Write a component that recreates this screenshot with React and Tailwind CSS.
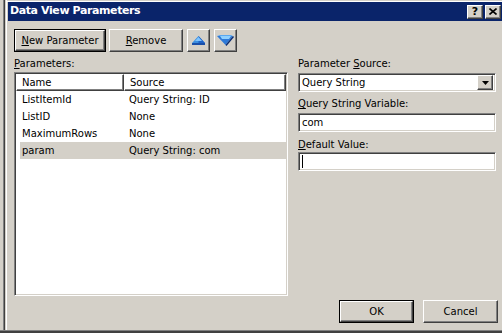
const raised =
  'border border-t-white border-l-white border-r-[#404040] border-b-[#404040] shadow-[inset_-1px_-1px_0_#808080]';
const sunken =
  'border border-t-[#808080] border-l-[#808080] border-r-white border-b-white shadow-[inset_1px_1px_0_#404040,inset_-1px_-1px_0_#d4d0c8]';

function Btn({ children, w, isDefault }) {
  if (isDefault) {
    return (
      <div className={`border border-black h-[23px] ${w}`}>
        <div className={`${raised} h-full w-full flex items-center justify-center`}>{children}</div>
      </div>
    );
  }
  return <div className={`${raised} h-[23px] ${w} flex items-center justify-center`}>{children}</div>;
}

function UpArrow() {
  return (
    <svg width="15" height="10" viewBox="0 0 15 10">
      <polygon points="7.5,0 14,7 1,7" fill="#3b8fe0" />
      <polygon points="7.5,0 14,7 7.5,7" fill="#1f63c8" />
      <polygon points="7.5,1 4,5 11,5" fill="#7ec4ff" />
      <rect x="1" y="7" width="13" height="2" fill="#1a4fa8" />
    </svg>
  );
}

function DownArrow() {
  return (
    <svg width="17" height="11" viewBox="0 0 17 11">
      <polygon points="0,1 16,1 8.5,10" fill="#2f7ad8" />
      <polygon points="3,1 14,1 12,4 5,4" fill="#8fd0ff" />
      <polygon points="8.5,10 16,1 17,2 9.5,11" fill="#0a2a70" />
      <polygon points="0,1 3,0 14,0 16,1" fill="#5aa8f0" />
    </svg>
  );
}

function U({ children }) {
  return <span className="underline underline-offset-[1px]">{children}</span>;
}

const rows = [
  ['ListItemId', 'Query String: ID'],
  ['ListID', 'None'],
  ['MaximumRows', 'None'],
  ['param', 'Query String: com'],
];

export default function App() {
  return (
    <div
      className="w-[502px] h-[333px] bg-[#d4d0c8] flex flex-col overflow-hidden text-[10px] text-black"
      style={{ fontFamily: '"DejaVu Sans", Tahoma, sans-serif' }}
    >
      <div className="flex h-[330px]">
        {/* frame edge of the window behind and this one */}
        <div className="w-[3px]" />
        <div className="w-px bg-[#808080]" />
        <div className="w-px bg-[#404040]" />
        <div className="w-px" />
        <div className="w-px bg-white" />

        <div className="flex-1 flex flex-col">
          <div className="h-px" />
          <div className="h-px bg-white" />
          {/* title bar */}
          <div className="ml-px h-[19px] bg-[#0a246a] flex items-center pl-[2px] pr-[1px]">
            <span className="text-white font-bold text-[11px] tracking-[-0.4px]">Data View Parameters</span>
            <div className="ml-auto flex items-center text-black">
              <div className={`${raised} bg-[#d4d0c8] w-[16px] h-[14px] flex items-center justify-center text-[11px] font-bold leading-none`}>?</div>
              <div className={`${raised} bg-[#d4d0c8] ml-[2px] w-[16px] h-[14px] flex items-center justify-center`}>
                <svg width="8" height="7" viewBox="0 0 8 7">
                  <path d="M0.5 0.5 L7.5 6.5 M7.5 0.5 L0.5 6.5" stroke="#000" strokeWidth="1.6" />
                </svg>
              </div>
            </div>
          </div>

          <div className="pl-[7px] flex flex-col">
            {/* toolbar */}
            <div className="mt-[8px] flex items-center">
              <Btn w="w-[92px]" isDefault>
                <span><U>N</U>ew Parameter</span>
              </Btn>
              <div className="ml-[3px]">
                <Btn w="w-[74px]">
                  <span><U>R</U>emove</span>
                </Btn>
              </div>
              <div className="ml-[4px]">
                <Btn w="w-[23px]">
                  <UpArrow />
                </Btn>
              </div>
              <div className="ml-[4px]">
                <Btn w="w-[23px]">
                  <DownArrow />
                </Btn>
              </div>
            </div>

            <div className="flex">
              {/* left: parameter list */}
              <div className="w-[274px] flex flex-col">
                <div className="mt-[5px] leading-[13px]"><U>P</U>arameters:</div>
                <div className={`${sunken} mt-[2px] h-[224px] bg-white p-px`}>
                  <div className="flex h-[17px]">
                    <div className={`${raised} w-[108px] pl-[5px] flex items-center`}>Name</div>
                    <div className={`${raised} flex-1 pl-[5px] flex items-center`}>Source</div>
                  </div>
                  {rows.map(([n, s], i) => (
                    <div
                      key={n}
                      className={`ml-[4px] h-[17px] flex items-center ${i === 3 ? 'bg-[#d4d0c8]' : ''}`}
                    >
                      <div className="w-[104px] pl-[2px]">{n}</div>
                      <div className="pl-[5px]">{s}</div>
                    </div>
                  ))}
                </div>
              </div>

              {/* right: parameter details */}
              <div className="ml-[10px] w-[198px] flex flex-col">
                <div className="mt-[5px] leading-[13px]">Parameter <U>S</U>ource:</div>
                <div className={`${sunken} mt-[3px] h-[19px] bg-white flex items-center p-[2px]`}>
                  <span className="pl-px">Query String</span>
                  <div className={`${raised} bg-[#d4d0c8] ml-auto w-[16px] h-[15px] flex items-center justify-center`}>
                    <svg width="7" height="4" viewBox="0 0 7 4">
                      <polygon points="0,0 7,0 3.5,4" fill="#000" />
                    </svg>
                  </div>
                </div>
                <div className="mt-[5px] leading-[13px]"><U>Q</U>uery String Variable:</div>
                <div className={`${sunken} mt-[3px] h-[19px] bg-white flex items-center pl-[3px]`}>com</div>
                <div className="mt-[6px] leading-[13px]"><U>D</U>efault Value:</div>
                <div className={`${sunken} mt-[1px] h-[19px] bg-white flex items-center pl-[3px]`}>
                  <div className="w-px h-[13px] bg-black" />
                </div>
              </div>
            </div>

            {/* dialog buttons */}
            <div className="mt-[4px] flex justify-end pr-[4px]">
              <Btn w="w-[75px]" isDefault>OK</Btn>
              <div className="ml-[9px]">
                <Btn w="w-[75px]">Cancel</Btn>
              </div>
            </div>
          </div>
        </div>
      </div>
      <div className="h-px bg-[#808080]" />
      <div className="h-[2px] bg-[#404040]" />
    </div>
  );
}
